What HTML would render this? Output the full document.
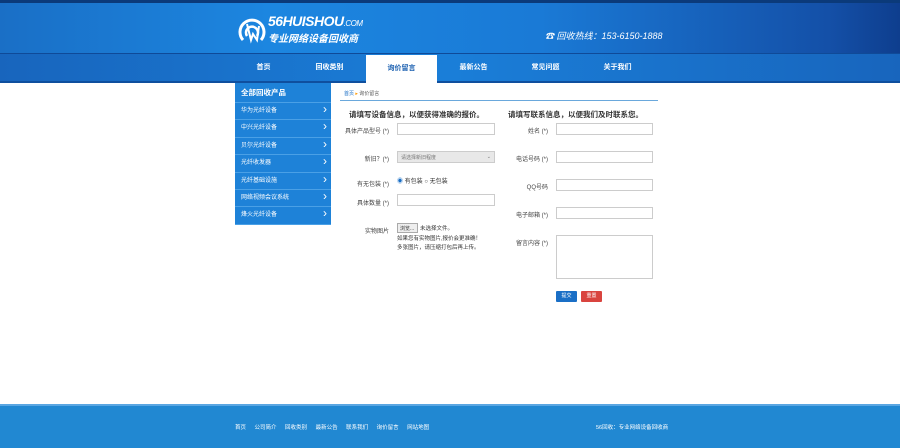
<!DOCTYPE html><html><head><meta charset="utf-8"><style>
*{margin:0;padding:0;box-sizing:border-box}
body{width:900px;height:448px;background:#fff;font-family:"Liberation Sans","Noto Sans CJK SC",sans-serif;position:relative;overflow:hidden;font-size:6px;color:#333}
.a{position:absolute}
.top{left:0;top:0;width:900px;height:53px;background:linear-gradient(90deg,#1a6fc6 0%,#1c86e0 30%,#1a7ad6 60%,#1450a8 92%,#0e3e8e 100%);border-top:3px solid #0b3a7a}
.nav{left:0;top:53px;width:900px;height:30px;background:linear-gradient(90deg,#1865bd,#1a7ed8 50%,#1865bd);border-top:1px solid #0f4a98;border-bottom:2px solid #0f4f9e}
.nav span{position:absolute;top:0;width:71px;height:28px;line-height:28px;text-align:center;color:#fff;font-size:7px;font-weight:bold}
.side{left:235px;top:83px;width:96px;height:141px;background:#1e82d8}
.side div{height:17.4px;line-height:17px;color:#fff;font-size:6px;padding-left:6px;border-bottom:1px solid #4aa0e6;position:relative}
.side div:after{content:"›";position:absolute;right:4px;top:-2px;font-size:12px}
.side .h{height:20px;line-height:20px;font-size:7.5px;font-weight:bold;background:#1e82d8}
.side .h:after{content:""}
input.t{position:absolute;height:12px;border:1px solid #ccc;background:#fff}
.l{position:absolute;text-align:right;font-size:6px;color:#444}
.foot{left:0;top:404px;width:900px;height:44px;background:#2188d2;border-top:2px solid #5aa6e2;color:#fff;font-size:5.5px}
</style></head><body>
<div class="a top"></div>
<svg class="a" style="left:237px;top:14px" width="30" height="30" viewBox="0 0 30 30"><path d="M6 26A12 12 0 1 1 24 26" fill="none" stroke="#fff" stroke-width="3"/><path d="M10 22A6 6 0 1 1 20 22" fill="none" stroke="#fff" stroke-width="2.5"/><path d="M10 10L14 26 16 20 20 26 22 12" fill="none" stroke="#fff" stroke-width="2"/></svg>
<div class="a" style="left:268px;top:13px;color:#fff;font-size:14px;font-style:italic;font-weight:bold;letter-spacing:-0.5px">56HUISHOU<span style="font-size:8px;font-weight:normal">.COM</span></div>
<div class="a" style="left:268px;top:30px;color:#fff;font-size:10px;font-style:italic;font-weight:bold">专业网络设备回收商</div>
<div class="a" style="left:545px;top:29px;color:#fff;font-size:9px;font-style:italic">☎ 回收热线：153-6150-1888</div>
<div class="a nav">
<span style="left:228px">首页</span><span style="left:294px">回收类别</span>
<span style="left:366px;background:#fff;color:#1a5fb0;top:1px">询价留言</span>
<span style="left:438px">最新公告</span><span style="left:510px">常见问题</span><span style="left:582px">关于我们</span></div>
<div class="a side"><div class="h">全部回收产品</div><div>华为光纤设备</div><div>中兴光纤设备</div><div>贝尔光纤设备</div><div>光纤收发器</div><div>光纤基础设施</div><div>网络视频会议系统</div><div>烽火光纤设备</div></div>
<div class="a" style="left:344px;top:90px;font-size:5px;color:#555"><span style="color:#1a6fc6">首页</span> <span style="color:#f90">▸</span> 询价留言</div>
<div class="a" style="left:340px;top:100px;width:318px;border-top:1px solid #6aa8dc"></div>
<div class="a" style="left:349px;top:109px;font-size:7.5px;font-weight:bold;color:#333">请填写设备信息，以便获得准确的报价。</div>
<div class="a" style="left:508px;top:109px;font-size:7.5px;font-weight:bold;color:#333">请填写联系信息，以便我们及时联系您。</div>
<div class="l" style="left:330px;width:59px;top:126px">具体产品型号 (*)</div><input class="t" style="left:397px;top:123px;width:98px">
<div class="l" style="left:330px;width:59px;top:154px">新旧？(*)</div><div class="a" style="left:397px;top:151px;width:98px;height:12px;background:#e8e8e8;border:1px solid #ccc;font-size:5px;color:#777;padding:2px 3px">请选择新旧程度<span style="float:right">⌄</span></div>
<div class="l" style="left:330px;width:59px;top:179px">有无包装 (*)</div><div class="a" style="left:397px;top:176px;font-size:6px"><span style="color:#1a6fc6">◉</span> 有包装 ○ 无包装</div>
<div class="l" style="left:330px;width:59px;top:198px">具体数量 (*)</div><input class="t" style="left:397px;top:194px;width:98px">
<div class="l" style="left:330px;width:59px;top:226px">实物图片</div>
<div class="a" style="left:397px;top:223px;width:21px;height:10px;border:1px solid #aaa;background:#eee;font-size:5px;padding:1px 2px">浏览...</div><div class="a" style="left:420px;top:224px;font-size:5.5px">未选择文件。</div>
<div class="a" style="left:397px;top:235px;font-size:5.5px;line-height:9px">如果您有实物图片,报价会更准确！<br>多张图片，请压缩打包后再上传。</div>
<div class="l" style="left:500px;width:48px;top:126px">姓名 (*)</div><input class="t" style="left:556px;top:123px;width:97px">
<div class="l" style="left:500px;width:48px;top:154px">电话号码 (*)</div><input class="t" style="left:556px;top:151px;width:97px">
<div class="l" style="left:500px;width:48px;top:182px">QQ号码</div><input class="t" style="left:556px;top:179px;width:97px">
<div class="l" style="left:500px;width:48px;top:210px">电子邮箱 (*)</div><input class="t" style="left:556px;top:207px;width:97px">
<div class="l" style="left:500px;width:48px;top:238px">留言内容 (*)</div><div class="a" style="left:556px;top:235px;width:97px;height:44px;border:1px solid #ccc"></div>
<div class="a" style="left:556px;top:291px;width:21px;height:11px;background:#1a6fc6;color:#fff;font-size:5px;text-align:center;line-height:11px;border-radius:1px">提交</div>
<div class="a" style="left:581px;top:291px;width:21px;height:11px;background:#d9443f;color:#fff;font-size:5px;text-align:center;line-height:11px;border-radius:1px">重置</div>
<div class="a foot"><div class="a" style="left:235px;top:17px;word-spacing:7px">首页 公司简介 回收类别 最新公告 联系我们 询价留言 网站地图</div><div class="a" style="left:596px;top:17px">56回收：专业网络设备回收商</div></div>
</body></html>
